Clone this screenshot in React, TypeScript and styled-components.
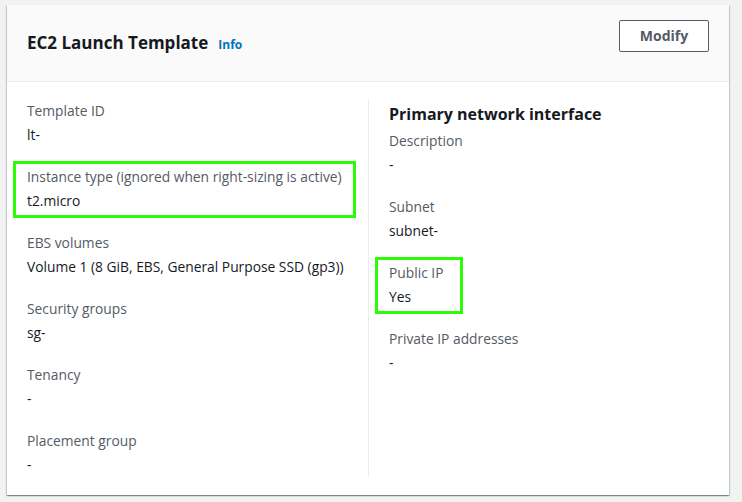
import React from "react";
import styled, { createGlobalStyle } from "styled-components";

const Global = createGlobalStyle`
  html, body { margin: 0; padding: 0; background: #f1f2f2; }
  body { font-family: "Open Sans", "Liberation Sans", Arial, sans-serif; -webkit-font-smoothing: antialiased; }
  #root { padding: 5px 13px 6px 7px; }
`;

const Card = styled.div`
  width: 722px;
  height: 490px;
  box-sizing: border-box;
  background: #fff;
  box-shadow: 0 1px 1px 0 rgba(0, 28, 36, 0.3), 1px 1px 1px 0 rgba(0, 28, 36, 0.15),
    -1px 1px 1px 0 rgba(0, 28, 36, 0.15);
  display: flex;
  flex-direction: column;
`;

const Header = styled.div`
  flex: 0 0 77px;
  box-sizing: border-box;
  background: #fafafa;
  border-bottom: 1px solid #eaeded;
  display: flex;
  align-items: flex-start;
  justify-content: space-between;
  padding: 15px 20px 0 20px;
`;

const TitleRow = styled.div`
  display: flex;
  align-items: baseline;
  gap: 10px;
  padding-top: 11px;
`;

const Title = styled.h2`
  margin: 0;
  font-size: 17px;
  line-height: 24px;
  font-weight: 700;
  color: #16191f;
`;

const InfoLink = styled.span`
  font-size: 12px;
  font-weight: 700;
  color: #0073bb;
`;

const Button = styled.button`
  width: 90px;
  height: 32px;
  box-sizing: border-box;
  background: #fff;
  border: 1px solid #545b64;
  border-radius: 2px;
  font-family: inherit;
  font-size: 14px;
  font-weight: 700;
  color: #545b64;
  padding: 0 0 1px 0;
`;

const Body = styled.div`
  flex: 1;
  min-height: 0;
  padding: 18px 20px 19px 20px;
  display: grid;
  grid-template-columns: 341px 1fr;
`;

const Column = styled.div<{ $divider?: boolean }>`
  display: flex;
  flex-direction: column;
  gap: 20px;
  ${(p) => (p.$divider ? "border-left: 1px solid #eaeded; padding-left: 20px;" : "")}
`;

const Heading = styled.h3`
  margin: 0 0 -18px 0;
  font-size: 16px;
  line-height: 28px;
  font-weight: 700;
  color: #16191f;
`;

const Item = styled.div`
  position: relative;
  display: flex;
  flex-direction: column;
`;

const Label = styled.div`
  font-size: 13.8px;
  line-height: 22px;
  color: #545b64;
  margin-bottom: 2px;
  white-space: nowrap;
`;

const Value = styled.div`
  font-size: 13.8px;
  line-height: 22px;
  color: #16191f;
  white-space: nowrap;
`;

const Highlight = styled.div<{ $width: number }>`
  position: absolute;
  top: -5px;
  left: -14px;
  width: ${(p) => p.$width}px;
  height: 57px;
  box-sizing: border-box;
  border: 3px solid #2dfc09;
  pointer-events: none;
`;

type Field = { label: string; value: string; hl?: number };

const left: Field[] = [
  { label: "Template ID", value: "lt-" },
  { label: "Instance type (ignored when right-sizing is active)", value: "t2.micro", hl: 343 },
  { label: "EBS volumes", value: "Volume 1 (8 GiB, EBS, General Purpose SSD (gp3))" },
  { label: "Security groups", value: "sg-" },
  { label: "Tenancy", value: "-" },
  { label: "Placement group", value: "-" },
];

const right: Field[] = [
  { label: "Description", value: "-" },
  { label: "Subnet", value: "subnet-" },
  { label: "Public IP", value: "Yes", hl: 88 },
  { label: "Private IP addresses", value: "-" },
];

const FieldView = ({ f }: { f: Field }) => (
  <Item>
    <Label>{f.label}</Label>
    <Value>{f.value}</Value>
    {f.hl ? <Highlight $width={f.hl} /> : null}
  </Item>
);

export default function App() {
  return (
    <>
      <Global />
      <Card>
        <Header>
          <TitleRow>
            <Title>EC2 Launch Template</Title>
            <InfoLink>Info</InfoLink>
          </TitleRow>
          <Button>Modify</Button>
        </Header>
        <Body>
          <Column>
            {left.map((f) => (
              <FieldView key={f.label} f={f} />
            ))}
          </Column>
          <Column $divider>
            <Heading>Primary network interface</Heading>
            {right.map((f) => (
              <FieldView key={f.label} f={f} />
            ))}
          </Column>
        </Body>
      </Card>
    </>
  );
}
